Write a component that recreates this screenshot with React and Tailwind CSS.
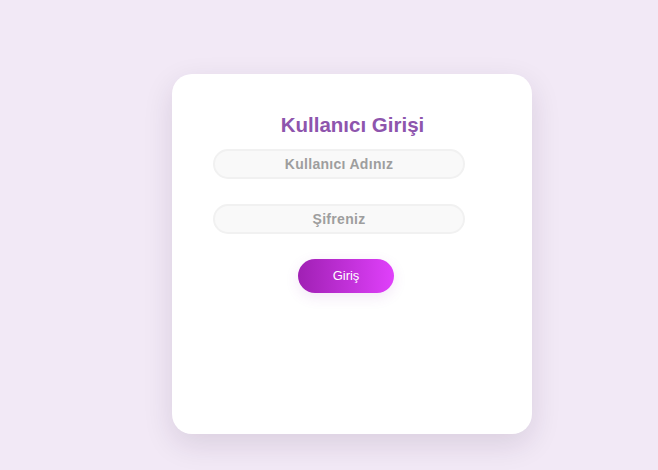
export default function App() {
  return (
    <div
      className="w-[658px] h-[470px] bg-[#f2e9f6] pl-[172px] pt-[74px] overflow-hidden"
      style={{ fontFamily: '"Liberation Sans", Arial, sans-serif' }}
    >
      <div className="w-[360px] h-[360px] bg-white rounded-[20px] shadow-[0_10px_30px_rgba(40,20,60,0.12)] px-[41px] pt-[38px] flex flex-col">
        <h1 className="text-[20.5px] leading-[26px] font-bold text-[#8e55ad] text-center pl-[1px]">
          Kullanıcı Girişi
        </h1>
        <div className="mt-[11px] flex flex-col gap-[25px]">
          <input
            type="text"
            placeholder="Kullanıcı Adınız"
            className="w-[252px] h-[30px] rounded-full bg-[#f9f9f9] border-2 border-[#f1f1f1] text-center text-[14px] font-bold tracking-[0.3px] placeholder:text-[#9e9e9e] outline-none"
          />
          <input
            type="password"
            placeholder="Şifreniz"
            className="w-[252px] h-[30px] rounded-full bg-[#f9f9f9] border-2 border-[#f1f1f1] text-center text-[14px] font-bold tracking-[0.3px] placeholder:text-[#9e9e9e] outline-none"
          />
        </div>
        <button className="mt-[25px] ml-[85px] w-[96px] h-[34px] rounded-full bg-gradient-to-r from-[#a020b4] to-[#e040fb] text-white text-[13px] shadow-[0_4px_14px_rgba(150,60,180,0.12)]">
          Giriş
        </button>
      </div>
    </div>
  );
}
